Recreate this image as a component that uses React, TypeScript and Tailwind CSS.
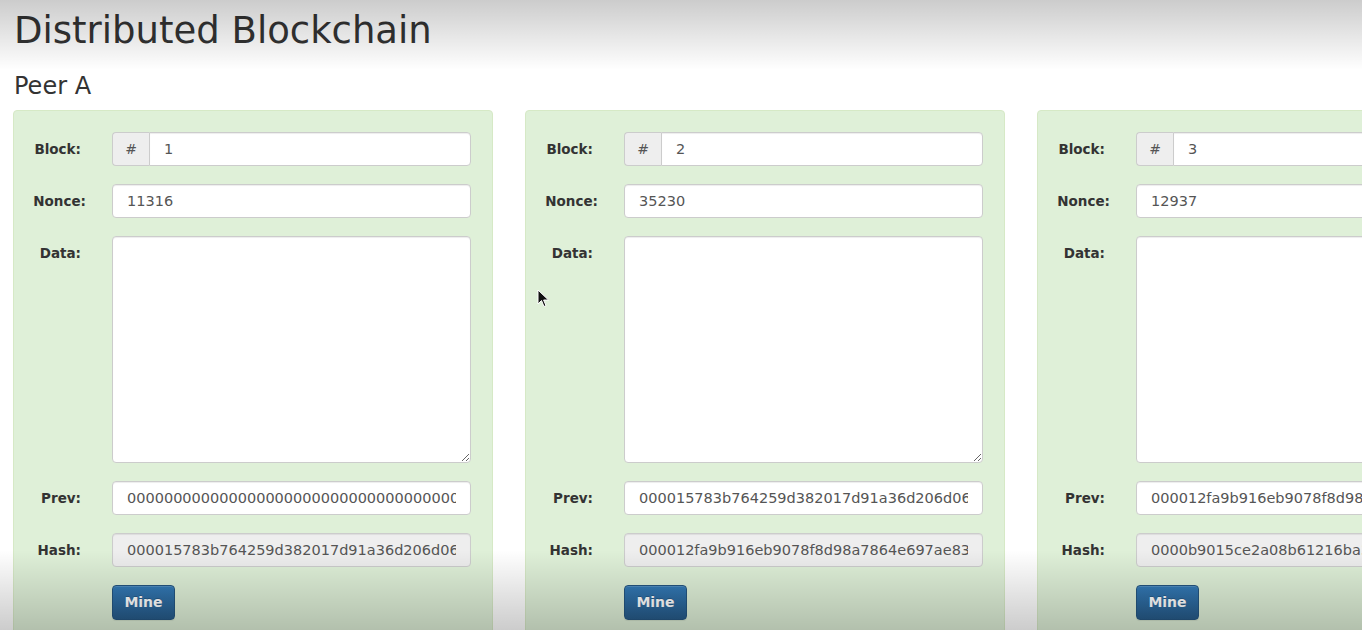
import React from "react"

type Block = {
  num: number
  nonce: string
  prev: string
  hash: string
}

const blocks: Block[] = [
  {
    num: 1,
    nonce: "11316",
    prev: "0000000000000000000000000000000000000000000000000000000000000000",
    hash: "000015783b764259d382017d91a36d206d0630e1d8f3a4c2b8d1e6f0a7c9b2e4",
  },
  {
    num: 2,
    nonce: "35230",
    prev: "000015783b764259d382017d91a36d206d0630e1d8f3a4c2b8d1e6f0a7c9b2e4",
    hash: "000012fa9b916eb9078f8d98a7864e697ae83ed54f0cc2b1a99d3f7e6b5c8a10",
  },
  {
    num: 3,
    nonce: "12937",
    prev: "000012fa9b916eb9078f8d98a7864e697ae83ed54f0cc2b1a99d3f7e6b5c8a10",
    hash: "0000b9015ce2a08b61216ba3c7d94e51f2a8b06d3e9c71f45a2b8d0e6c3f9a17",
  },
]

const inputCls =
  "h-[34px] w-full rounded-[4px] border border-[#ccc] px-[14px] text-[14.5px] text-[#555] shadow-[inset_0_1px_1px_rgba(0,0,0,0.075)] outline-none"

const Label: React.FC<{ children: React.ReactNode; className?: string }> = ({
  children,
  className = "w-[67px]",
}) => (
  <label
    className={
      "shrink-0 pt-[7px] text-right text-[13.5px] leading-5 font-bold text-[#333] " +
      className
    }
  >
    {children}
  </label>
)

const Card: React.FC<{ block: Block }> = ({ block }) => {
  return (
    <div className="flex w-[480px] shrink-0 flex-col gap-[18px] rounded-[4px] border border-[#d6e9c6] bg-[#dff0d8] pt-[21px] pr-[21px] pb-4">
      <div className="flex gap-[31px]">
        <Label>Block:</Label>
        <div className="flex w-full">
          <span className="flex h-[34px] w-[37px] shrink-0 items-center justify-center rounded-l-[4px] border border-r-0 border-[#ccc] bg-[#eee] text-[14px] text-[#555]">
            #
          </span>
          <input
            className={inputCls + " rounded-l-none bg-white"}
            defaultValue={String(block.num)}
          />
        </div>
      </div>
      <div className="flex gap-[26px]">
        <Label className="w-[72px]">Nonce:</Label>
        <input className={inputCls + " bg-white"} defaultValue={block.nonce} />
      </div>
      <div className="flex gap-[31px]">
        <Label>Data:</Label>
        <textarea className="h-[227px] w-full rounded-[4px] border border-[#ccc] bg-white px-3 py-1.5 text-[14.5px] text-[#555] shadow-[inset_0_1px_1px_rgba(0,0,0,0.075)] outline-none" />
      </div>
      <div className="flex gap-[31px]">
        <Label>Prev:</Label>
        <input className={inputCls + " bg-white"} readOnly defaultValue={block.prev} />
      </div>
      <div className="flex gap-[31px]">
        <Label>Hash:</Label>
        <input className={inputCls + " bg-[#eee]"} readOnly defaultValue={block.hash} />
      </div>
      <div className="flex gap-[31px]">
        <div className="w-[67px] shrink-0" />
        <button className="h-[35px] w-[63px] rounded-[4px] border border-[#245580] bg-linear-to-b from-[#337ab7] to-[#265a88] text-[14px] font-bold text-white shadow-[inset_0_1px_0_rgba(255,255,255,0.15),0_1px_1px_rgba(0,0,0,0.075)] [text-shadow:0_-1px_0_rgba(0,0,0,0.2)]">
          Mine
        </button>
      </div>
    </div>
  )
}

export default function App() {
  return (
    <div
      className="relative h-[630px] w-[1362px] overflow-hidden bg-white px-[13px]"
      style={{ fontFamily: '"DejaVu Sans", Verdana, sans-serif' }}
    >
      <h1 className="mt-[11px] pl-px text-[37px] leading-[1.1] text-[#333]">
        Distributed Blockchain
      </h1>
      <h2 className="mt-[21px] pl-px text-[24px] leading-[1.1] text-[#333]">
        Peer A
      </h2>
      <div className="mt-[11px] flex gap-8">
        {blocks.map((b) => (
          <Card key={b.num} block={b} />
        ))}
      </div>

      {/* mouse pointer from the recording */}
      <svg
        className="pointer-events-none absolute top-[289px] left-[537px]"
        width="13"
        height="20"
        viewBox="0 0 13 20"
      >
        <path
          d="M1 1 L1 15 L4.5 11.5 L7 17.5 L9 16.6 L6.6 11 L11.5 11 Z"
          fill="#111"
          stroke="#fff"
          strokeWidth="1"
          strokeLinejoin="round"
        />
      </svg>

      {/* video vignette */}
      <div className="pointer-events-none absolute inset-x-0 top-0 h-[70px] bg-linear-to-b from-black/20 to-transparent" />
      <div className="pointer-events-none absolute inset-x-0 bottom-0 h-[80px] bg-linear-to-t from-black/20 to-transparent" />
    </div>
  )
}
